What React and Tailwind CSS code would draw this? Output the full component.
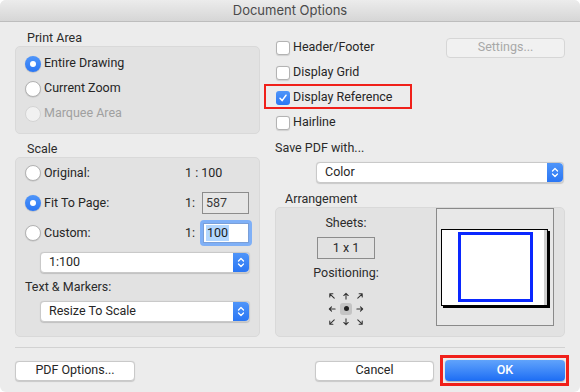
import React from "react";

const font = { fontFamily: "Roboto, 'Liberation Sans', sans-serif" };

function Radio({ checked, disabled, label }) {
  return (
    <div className="flex items-center h-[25px]">
      {checked ? (
        <div className="w-[16px] h-[16px] rounded-full bg-gradient-to-b from-[#4f95f9] to-[#2a76f4] flex items-center justify-center shadow-[0_0.5px_1px_rgba(0,0,0,0.25)]">
          <div className="w-[6px] h-[6px] rounded-full bg-white" />
        </div>
      ) : (
        <div
          className={
            "w-[16px] h-[16px] rounded-full border " +
            (disabled ? "bg-[#f1f1f1] border-[#d4d4d4]" : "bg-white border-[#b3b3b3] shadow-[0_0.5px_1px_rgba(0,0,0,0.15)]")
          }
        />
      )}
      <span className={"ml-[3px] text-[12.5px] " + (disabled ? "text-[#a0a0a0]" : "text-[#262626]")}>{label}</span>
    </div>
  );
}

function Checkbox({ checked, label }) {
  return (
    <div className="flex items-center">
      {checked ? (
        <div className="w-[14px] h-[14px] rounded-[3px] bg-gradient-to-b from-[#4f95f9] to-[#2a76f4] flex items-center justify-center">
          <svg width="10" height="10" viewBox="0 0 10 10">
            <path d="M2 5.3 L4.1 7.6 L8 2.2" stroke="white" strokeWidth="1.5" fill="none" strokeLinecap="round" strokeLinejoin="round" />
          </svg>
        </div>
      ) : (
        <div className="w-[14px] h-[14px] rounded-[3px] bg-white border border-[#b3b3b3] shadow-[0_0.5px_1px_rgba(0,0,0,0.12)]" />
      )}
      <span className="ml-[3px] text-[12.5px] text-[#262626]">{label}</span>
    </div>
  );
}

function Stepper() {
  return (
    <div className="w-[16px] self-stretch rounded-r-[4px] bg-gradient-to-b from-[#4f95f9] to-[#2a76f4] flex items-center justify-center">
      <svg width="8" height="13" viewBox="0 0 8 13">
        <path d="M1.5 5 L4 2.5 L6.5 5" stroke="white" strokeWidth="1.3" fill="none" strokeLinecap="round" strokeLinejoin="round" />
        <path d="M1.5 8 L4 10.5 L6.5 8" stroke="white" strokeWidth="1.3" fill="none" strokeLinecap="round" strokeLinejoin="round" />
      </svg>
    </div>
  );
}

function Select({ label, className }) {
  return (
    <div className={"flex items-stretch bg-white rounded-[4px] border border-[#c9c9c9] shadow-[0_0.5px_1px_rgba(0,0,0,0.15)] " + className}>
      <div className="flex-1 flex items-center text-[12.5px] text-[#262626] pl-[8px]">{label}</div>
      <Stepper />
    </div>
  );
}

function Button({ children, className }) {
  return (
    <div className={"h-[20px] flex items-center justify-center rounded-[4px] bg-white border border-[#c9c9c9] shadow-[0_0.5px_1px_rgba(0,0,0,0.15)] text-[12.5px] text-[#262626] " + className}>
      {children}
    </div>
  );
}

function Arrow({ d }) {
  return (
    <div className="w-[14px] h-[13px] flex items-center justify-center">
      <svg width="8" height="8" viewBox="0 0 9 9">
        <path d={d} stroke="#333" strokeWidth="1.2" fill="none" strokeLinecap="round" strokeLinejoin="round" />
      </svg>
    </div>
  );
}

export default function App() {
  return (
    <div className="w-[580px] h-[392px] bg-white" style={font}>
      <div className="w-[580px] h-[392px] rounded-[6px] overflow-hidden bg-[#ececec] flex flex-col">
        {/* title bar */}
        <div className="h-[22px] shrink-0 bg-gradient-to-b from-[#ececec] to-[#d6d6d6] border-b border-[#bdbdbd] flex items-center justify-center text-[13px] text-[#4a4a4a] [font-family:Inter,sans-serif]">
          Document Options
        </div>

        <div className="flex px-[15px] gap-[15px]">
          {/* left column */}
          <div className="w-[245px] flex flex-col">
            <div className="h-[16px] mt-[8px] pl-[12px] text-[12.5px] leading-[16px] text-[#2b2b2b]">Print Area</div>
            <div className="h-[88px] rounded-[5px] bg-[#e2e2e2] border border-[#d9d9d9] pl-[9px] pt-[4px]">
              <Radio checked label="Entire Drawing" />
              <Radio label="Current Zoom" />
              <Radio disabled label="Marquee Area" />
            </div>

            <div className="h-[16px] mt-[7px] pl-[12px] text-[12.5px] leading-[16px] text-[#2b2b2b]">Scale</div>
            <div className="h-[180px] rounded-[5px] bg-[#e2e2e2] border border-[#d9d9d9] pl-[9px] pt-0">
              <div className="flex items-center h-[30px]">
                <div className="w-[160px]"><Radio label="Original:" /></div>
                <span className="text-[12.5px] text-[#262626]">1 : 100</span>
              </div>
              <div className="flex items-center h-[30px]">
                <div className="w-[160px]"><Radio checked label="Fit To Page:" /></div>
                <span className="text-[12.5px] text-[#262626] w-[17px]">1:</span>
                <div className="w-[47px] h-[22px] border border-[#8c8c8c] bg-[#e6e6e6] flex items-center pl-[3px] text-[12.5px] text-[#3a3a3a]">587</div>
              </div>
              <div className="flex items-center h-[30px]">
                <div className="w-[160px]"><Radio label="Custom:" /></div>
                <span className="text-[12.5px] text-[#262626] w-[15px]">1:</span>
                <div className="w-[52px] h-[26px] rounded-[4px] bg-[#7fb0f7] p-[3px]">
                  <div className="w-full h-full bg-white border border-[#7a9fd8] flex items-center pl-[2px]">
                    <span className="bg-[#b3d7ff] text-[12.5px] leading-[16px] text-[#1a1a1a] px-[1px]">100</span>
                  </div>
                </div>
              </div>
              <Select label="1:100" className="ml-[15px] mt-[4px] w-[210px] h-[21px]" />
              <div className="h-[16px] mt-[6px] text-[12.5px] leading-[16px] text-[#2b2b2b]">Text &amp; Markers:</div>
              <Select label="Resize To Scale" className="ml-[15px] mt-[6px] w-[210px] h-[21px]" />
            </div>
          </div>

          {/* right column */}
          <div className="w-[290px] flex flex-col">
            <div className="mt-[13px] flex flex-col">
              <div className="h-[25px] flex items-center pl-[1px]">
                <Checkbox label="Header/Footer" />
                <div className="ml-auto w-[119px] h-[20px] rounded-[4px] bg-[#f1f1f1] border border-[#d6d6d6] flex items-center justify-center text-[12.5px] text-[#a8a8a8]">
                  Settings...
                </div>
              </div>
              <div className="h-[25px] flex items-center pl-[1px]">
                <Checkbox label="Display Grid" />
              </div>
              <div className="h-[25px] flex items-center pl-[1px] relative">
                <Checkbox checked label="Display Reference" />
                <div className="absolute left-[-11px] top-[-1px] w-[148px] h-[25px] border-[2px] border-[#f0201a]" />
              </div>
              <div className="h-[25px] flex items-center pl-[1px]">
                <Checkbox label="Hairline" />
              </div>
            </div>

            <div className="h-[16px] mt-[5px] text-[12.5px] leading-[16px] text-[#2b2b2b]">Save PDF with...</div>
            <Select label="Color" className="ml-[41px] mt-[6px] w-[248px] h-[21px]" />

            <div className="h-[16px] mt-[8px] pl-[10px] text-[12.5px] leading-[16px] text-[#2b2b2b]">Arrangement</div>
            <div className="h-[130px] rounded-[5px] bg-[#e2e2e2] border border-[#d9d9d9] flex">
              <div className="w-[140px] flex flex-col items-center">
                <div className="h-[16px] mt-[7px] text-[12.5px] leading-[16px] text-[#2b2b2b]">Sheets:</div>
                <div className="mt-[6px] w-[58px] h-[22px] border border-[#8c8c8c] bg-[#e2e2e2] flex items-center justify-center text-[12.5px] text-[#2b2b2b]">
                  1 x 1
                </div>
                <div className="h-[16px] mt-[6px] text-[12.5px] leading-[16px] text-[#2b2b2b]">Positioning:</div>
                <div className="mt-[8px] grid grid-cols-3">
                  <Arrow d="M2 2 L7 7 M2 2 L2 5.5 M2 2 L5.5 2" />
                  <Arrow d="M4.5 1.5 L4.5 8 M2 4 L4.5 1.5 L7 4" />
                  <Arrow d="M7 2 L2 7 M7 2 L3.5 2 M7 2 L7 5.5" />
                  <Arrow d="M1.5 4.5 L8 4.5 M4 2 L1.5 4.5 L4 7" />
                  <div className="w-[14px] h-[13px] flex items-center justify-center">
                    <div className="w-[12px] h-[12px] rounded-[3px] bg-[#c4c4c4] flex items-center justify-center">
                      <div className="w-[5px] h-[5px] rounded-full bg-[#222]" />
                    </div>
                  </div>
                  <Arrow d="M1 4.5 L7.5 4.5 M5 2 L7.5 4.5 L5 7" />
                  <Arrow d="M7 2 L2 7 M2 7 L2 3.5 M2 7 L5.5 7" />
                  <Arrow d="M4.5 1 L4.5 7.5 M2 5 L4.5 7.5 L7 5" />
                  <Arrow d="M2 2 L7 7 M7 7 L7 3.5 M7 7 L3.5 7" />
                </div>
              </div>
              <div className="ml-auto mr-[10px] mt-0 w-[118px] h-[118px] border border-[#8a8a8a] bg-[#e8e8e8] pt-[20px] pl-[4px]">
                <div className="w-[107px] h-[77px] border border-black bg-white shadow-[2px_2px_0_#000] flex pl-[16px]">
                  <div className="w-[75px] h-[70px] mt-[2px] border-[3px] border-[#0a28ff]" />
                  <div className="ml-auto w-[3px] h-full bg-[#cfcfcf]" />
                </div>
              </div>
            </div>
          </div>
        </div>

        {/* separator */}
        <div className="mx-[15px] mt-[10px] h-px bg-[#d2d2d2]" />

        {/* buttons */}
        <div className="flex items-center px-[15px] mt-[12px]">
          <Button className="w-[120px]">PDF Options...</Button>
          <Button className="ml-auto w-[119px]">Cancel</Button>
          <div className="relative ml-[11px]">
            <div className="w-[120px] h-[21px] rounded-[4px] bg-gradient-to-b from-[#60a3fb] to-[#1b6cf4] flex items-center justify-center text-[12.5px] text-white font-medium shadow-[0_0.5px_1px_rgba(0,0,0,0.25)]">
              OK
            </div>
            <div className="absolute left-[-5px] top-[-5px] w-[129px] h-[31px] border-[3px] border-[#f0201a]" />
          </div>
        </div>
      </div>
    </div>
  );
}
